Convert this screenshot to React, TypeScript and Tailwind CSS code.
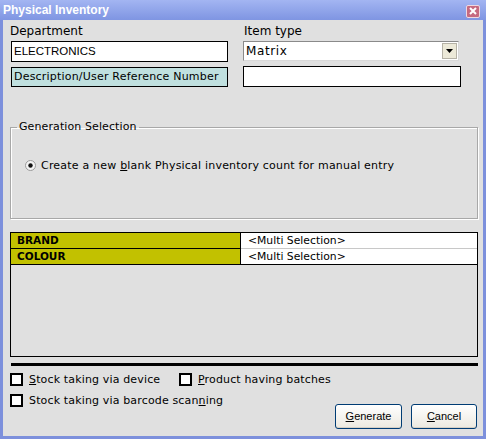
import React from "react";

const dv = { fontFamily: '"DejaVu Sans", Verdana, sans-serif' };
const lib = { fontFamily: '"Liberation Sans", Arial, sans-serif' };

function Check({ children }: { children: React.ReactNode }) {
  return (
    <div className="flex items-center h-[13px]">
      <div className="w-[13px] h-[13px] border-2 border-black bg-white shrink-0" />
      <span className="ml-[6px] text-[11px] leading-[13px] tracking-[0.15px] text-black whitespace-nowrap" style={dv}>
        {children}
      </span>
    </div>
  );
}

function Btn({ first, rest, w }: { first: string; rest: string; w: string }) {
  return (
    <div
      className={`${w} h-[25px] rounded-[3px] border border-[#003c74] bg-gradient-to-b from-[#ffffff] to-[#ece9e0] flex items-center justify-center text-[11px] text-black shadow-[inset_0_-1px_0_#d6d0c5]`}
      style={lib}
    >
      <span>
        <span className="underline">{first}</span>
        {rest}
      </span>
    </div>
  );
}

export default function App() {
  return (
    <div className="w-[486px] h-[439px] flex flex-col bg-[#e0e0e0] overflow-hidden">
      {/* Title bar */}
      <div className="h-[20px] shrink-0 flex items-center justify-between pl-[3px] pr-[6px] bg-gradient-to-b from-[#a3b5f2] to-[#7f95e2]">
        <span className="text-white font-bold text-[12px] leading-[14px]" style={lib}>
          Physical Inventory
        </span>
        <div className="w-[14px] h-[13px] mt-[2px] bg-[#c66a80] border border-[#eed8e0] rounded-[2px] flex items-center justify-center">
          <svg width="8" height="8" viewBox="0 0 8 8">
            <path d="M1 1L7 7M7 1L1 7" stroke="white" strokeWidth="2" />
          </svg>
        </div>
      </div>

      {/* Body */}
      <div className="flex-1 flex flex-col border-x-[3px] border-b-[3px] border-[#7d90dc] pl-[7px] pr-[5px] pt-[3px]">
        {/* Top fields */}
        <div className="flex">
          <div className="w-[233px] flex flex-col">
            <div className="text-[12px] leading-[17px] text-black" style={dv}>Department</div>
            <div
              className="ml-[1px] mt-[1px] w-[217px] h-[21px] border border-black bg-white flex items-center pl-[2px] text-[11.5px] text-black"
              style={lib}
            >
              ELECTRONICS
            </div>
            <div
              className="ml-[1px] mt-[5px] w-[217px] h-[20px] border border-black bg-[#c0e0df] flex items-center pl-[2px] text-[11px] tracking-[0.2px] text-black whitespace-nowrap"
              style={dv}
            >
              Description/User Reference Number
            </div>
          </div>
          <div className="flex flex-col">
            <div className="pl-[1px] text-[12px] leading-[17px] text-black" style={dv}>Item type</div>
            <div className="mt-[1px] w-[216px] h-[20px] border border-[#8a8a8a] border-r-[#d8d8d8] border-b-[#d8d8d8] bg-white flex items-center justify-between pl-[2px] pr-[1px]">
              <span className="text-[12px] tracking-[0.6px] text-black" style={dv}>Matrix</span>
              <div className="w-[15px] h-[16px] bg-[#ece9d8] border border-[#b5b2a6] flex items-center justify-center">
                <svg width="7" height="4" viewBox="0 0 7 4">
                  <path d="M0 0H7L3.5 4Z" fill="black" />
                </svg>
              </div>
            </div>
            <div className="mt-[5px] w-[218px] h-[21px] border border-black bg-white" />
          </div>
        </div>

        {/* Generation Selection */}
        <fieldset className="mt-[33px] h-[99px] border border-[#a8a8a8] shadow-[inset_1px_1px_0_#ffffff,1px_1px_0_#ffffff]">
          <legend className="ml-[6px] px-[2px] text-[11px] leading-[14px] tracking-[0.1px] text-black" style={dv}>
            Generation Selection
          </legend>
          <div className="flex items-center mt-[24px] pl-[14px]">
            <svg width="11" height="11" viewBox="0 0 11 11" className="shrink-0">
              <circle cx="5.5" cy="5.5" r="5" fill="#f4f4f4" stroke="#9a9a9a" />
              <circle cx="5.5" cy="5.5" r="2.2" fill="#111" />
            </svg>
            <span className="ml-[5px] text-[11px] leading-[15px] tracking-[0.2px] text-black whitespace-nowrap" style={dv}>
              Create a new <span className="underline">b</span>lank Physical inventory count for manual entry
            </span>
          </div>
        </fieldset>

        {/* Attribute grid */}
        <div className="mt-[13px] h-[125px] border border-black flex flex-col">
          <div className="flex h-[16px]">
            <div className="w-[230px] border-r border-b border-black bg-[#c2c100] pl-[6px] text-[10.5px] font-bold leading-[15px] text-black" style={dv}>
              BRAND
            </div>
            <div className="flex-1 bg-white border-b border-[#c8c8c8] pl-[7px] text-[10.8px] leading-[15px] text-black" style={dv}>
              &lt;Multi Selection&gt;
            </div>
          </div>
          <div className="flex h-[16px]">
            <div className="w-[230px] border-r border-b border-black bg-[#c2c100] pl-[6px] text-[10.5px] font-bold leading-[15px] text-black" style={dv}>
              COLOUR
            </div>
            <div className="flex-1 bg-white border-b border-black pl-[7px] text-[10.8px] leading-[15px] text-black" style={dv}>
              &lt;Multi Selection&gt;
            </div>
          </div>
        </div>

        <div className="mt-[6px] ml-[1px] h-[3px] bg-black" />

        {/* Bottom */}
        <div className="flex-1 flex justify-between pb-[7px]">
          <div className="flex flex-col pt-[7px] gap-[8px]">
            <div className="flex">
              <div className="w-[169px]">
                <Check>
                  <span className="underline">S</span>tock taking via device
                </Check>
              </div>
              <Check>
                <span className="underline">P</span>roduct having batches
              </Check>
            </div>
            <Check>
              Stock taking via barcode scan<span className="underline">n</span>ing
            </Check>
          </div>
          <div className="self-end flex gap-[9px] mr-[1px]">
            <Btn first="G" rest="enerate" w="w-[67px]" />
            <Btn first="C" rest="ancel" w="w-[66px]" />
          </div>
        </div>
      </div>
    </div>
  );
}
